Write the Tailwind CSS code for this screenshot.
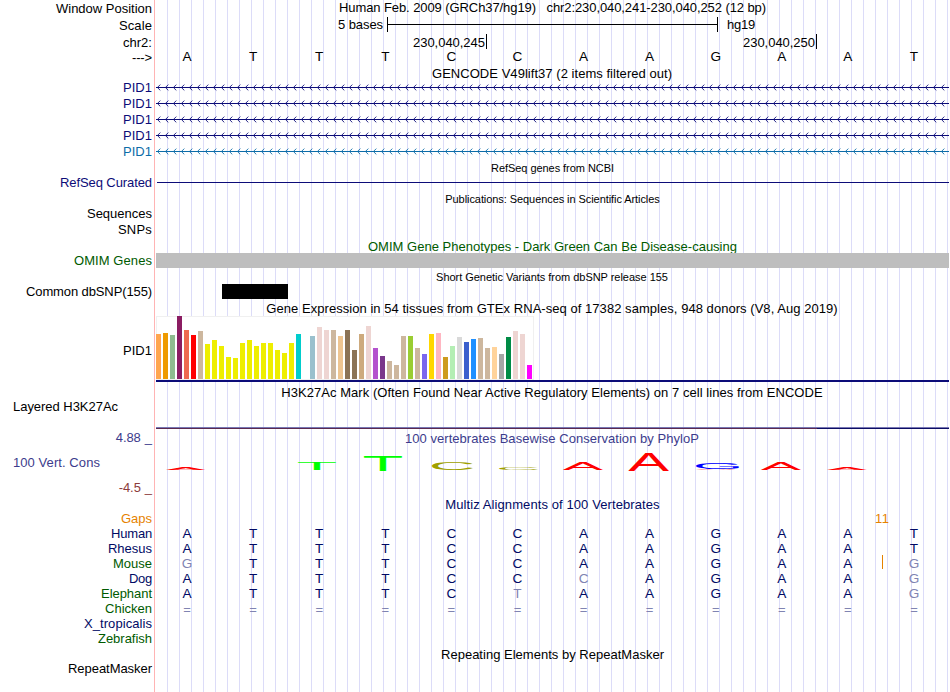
<!DOCTYPE html>
<html lang="en">
<head>
<meta charset="utf-8">
<title>Genome Browser</title>
<script src="https://cdn.jsdelivr.net/npm/@tailwindcss/browser@4"></script>
</head>
<body class="bg-white">
<main class="relative flex h-[692px] w-[950px] overflow-hidden bg-white font-['Liberation_Sans',Arial,sans-serif] text-[13px] leading-[15px] whitespace-pre text-black">
  <!-- guide lines behind the tracks -->
  <div class="absolute inset-y-0 left-[154px] w-px bg-[#ffb4b4]"></div>
  <div class="absolute inset-y-0 left-[167px] w-[782px] bg-[repeating-linear-gradient(90deg,#dcdcf8_0_1px,transparent_1px_12px)]"></div>

  <!-- track labels -->
  <section class="relative flex w-[154px] shrink-0 flex-col items-end pt-px pr-[2px]">
    <div data-w="96">Window Position</div>
    <div class="mt-[2px]" data-w="33">Scale</div>
    <div class="mt-[2px]" data-w="29">chr2:</div>
    <div data-w="20">---&gt;</div>
    <div class="mt-[15px] flex flex-col items-end gap-px text-[#0c0c78]">
      <div data-w="29">PID1</div>
      <div data-w="29">PID1</div>
      <div data-w="29">PID1</div>
      <div data-w="29">PID1</div>
      <div class="text-[#0c6ca8]" data-w="29">PID1</div>
    </div>
    <div class="mt-[16px] text-[#0c0c78]" data-w="92">RefSeq Curated</div>
    <div class="mt-[16px]" data-w="65">Sequences</div>
    <div class="mt-px" data-w="34">SNPs</div>
    <div class="mt-[16px] text-[#005a00]" data-w="78">OMIM Genes</div>
    <div class="mt-[16px]" data-w="126">Common dbSNP(155)</div>
    <div class="mt-[44px]" data-w="29">PID1</div>
    <div class="mt-[41px] ml-[13px] self-start" data-w="105">Layered H3K27Ac</div>
    <div class="mt-[16px] flex items-start gap-[4px] text-[#3c3c8c]"><span data-w="25">4.88</span><span>_</span></div>
    <div class="mt-[10px] ml-[13px] self-start text-[#3c3c8c]" data-w="87">100 Vert. Cons</div>
    <div class="mt-[10px] flex items-start gap-[4px] text-[#8c3c3c]"><span data-w="22">-4.5</span><span>_</span></div>
    <div class="mt-[16px] flex flex-col items-end text-[#000a64]">
      <div class="text-[#e68200]" data-w="31">Gaps</div>
      <div data-w="41">Human</div>
      <div data-w="44">Rhesus</div>
      <div class="text-[#005a00]" data-w="39">Mouse</div>
      <div data-w="23">Dog</div>
      <div class="text-[#005a00]" data-w="51">Elephant</div>
      <div class="text-[#005a00]" data-w="47">Chicken</div>
      <div data-w="68">X_tropicalis</div>
      <div class="text-[#005a00]" data-w="54">Zebrafish</div>
    </div>
    <div class="mt-[15px]" data-w="84">RepeatMasker</div>
  </section>

  <!-- track data -->
  <section class="relative flex w-[796px] shrink-0 flex-col">
    <div class="flex h-[17px] justify-center pl-px"><span data-w="427">Human Feb. 2009 (GRCh37/hg19)   chr2:230,040,241-230,040,252 (12 bp)</span></div>
    <div class="flex h-[17px] pl-[184px]">
      <span class="w-[49px]"><span data-w="45">5 bases</span></span>
      <span class="flex h-[15px] w-[331px] items-center border-x border-black"><span class="h-px w-full bg-black"></span></span>
      <span class="ml-[9px]" data-w="28">hg19</span>
    </div>
    <div class="flex h-[15px] leading-[13px]">
      <span class="flex h-[15px] w-[333px] justify-end border-r border-black pt-[2px] pr-px"><span data-w="72">230,040,245</span></span>
      <span class="flex h-[15px] w-[330px] justify-end border-r border-black pt-[2px] pr-px"><span data-w="72">230,040,250</span></span>
    </div>
    <div class="grid h-[17px] w-[793px] grid-cols-12 text-center text-[13.6px]" id="bases"></div>
    <div class="flex h-[14px] justify-center"><span data-w="240">GENCODE V49lift37 (2 items filtered out)</span></div>
    <svg class="ml-[2px] h-[81px] w-[793px]" viewBox="0 0 793 81">
      <defs>
        <pattern id="arrows" width="8" height="16" patternUnits="userSpaceOnUse">
          <path d="M4.3 4.6 L1.4 7.5 L4.3 10.4" fill="none" stroke="#0c0c78" stroke-width=".9"/>
          <path d="M0 7.5H8" stroke="#0c0c78"/>
        </pattern>
        <pattern id="arrowsBlue" width="8" height="16" patternUnits="userSpaceOnUse">
          <path d="M4.3 4.6 L1.4 7.5 L4.3 10.4" fill="none" stroke="#0c6ca8" stroke-width=".9"/>
          <path d="M0 7.5H8" stroke="#0c6ca8"/>
        </pattern>
      </defs>
      <rect width="793" height="64" fill="url(#arrows)"/>
      <rect y="64" width="793" height="16" fill="url(#arrowsBlue)"/>
    </svg>
    <div class="flex h-[21px] justify-center pl-px text-[11px]"><span data-w="123" data-size="11">RefSeq genes from NCBI</span></div>
    <div class="ml-[3px] h-px w-[792px] bg-[#0c0c78]"></div>
    <div class="mt-[9px] flex h-[47px] justify-center pl-px text-[11px]"><span data-w="215" data-size="11">Publications: Sequences in Scientific Articles</span></div>
    <div class="flex h-[14px] justify-center overflow-hidden pl-px text-[#005a00]"><span data-w="369">OMIM Gene Phenotypes - Dark Green Can Be Disease-causing</span></div>
    <div class="ml-[2px] h-[15px] w-[793px] bg-[#bebebe]"></div>
    <div class="mt-[2px] flex h-[14px] justify-center text-[11px]"><span data-w="232" data-size="11">Short Genetic Variants from dbSNP release 155</span></div>
    <div class="ml-[68px] h-[15px] w-[66px] bg-black"></div>
    <div class="mt-[2px] flex h-[15px] justify-center"><span data-w="572">Gene Expression in 54 tissues from GTEx RNA-seq of 17382 samples, 948 donors (V8, Aug 2019)</span></div>
    <div class="ml-[2px] flex h-[64px] w-[378px] items-end gap-[2px] bg-white pb-px shadow-[inset_0_0_0_1px_#f0f0f0]" id="expression"></div>
    <div class="ml-[2px] h-[2px] w-[793px] bg-[#0c0c78]"></div>
    <div class="mt-[3px] flex h-[42px] justify-center"><span data-w="542">H3K27Ac Mark (Often Found Near Active Regulatory Elements) on 7 cell lines from ENCODE</span></div>
    <div class="ml-[2px] h-px w-[793px] bg-[#7878b4]"></div>
    <div class="ml-[2px] flex h-px w-[793px]"><span class="w-[661px] bg-[#5a2850]"></span><span class="flex-1 bg-[#0c0c64]"></span></div>
    <div class="mt-[2px] flex h-[15px] justify-center text-[#3c3c8c]"><span data-w="294">100 vertebrates Basewise Conservation by PhyloP</span></div>
    <!-- conservation logo: each base is stretched to its score -->
    <svg class="h-[51px] w-[796px]" viewBox="154 446 796 51" font-family="Liberation Sans, Arial, sans-serif" font-size="100" id="logo"></svg>
    <div class="flex h-[14px] justify-center pl-px text-[#000a64]"><span data-w="215">Multiz Alignments of 100 Vertebrates</span></div>
    <div class="h-[15px] pl-[721px] tracking-[0.4px] text-[#e68200]">11</div>
    <div class="relative grid h-[121px] w-[793px] grid-cols-12 content-start text-center text-[13.6px] text-[#000a64]" id="alignment">
      <span class="absolute top-[29px] left-[728px] h-[14px] w-px bg-[#e68200]"></span>
    </div>
    <div class="flex justify-center pl-px"><span data-w="223">Repeating Elements by RepeatMasker</span></div>
  </section>
</main>
<script>
const el = (cls, text) => { const s = document.createElement('span'); s.className = cls; s.textContent = text; return s; };

for (const b of 'ATTTCCAAGAAT') document.getElementById('bases').append(el('', b));

// lower case marks a base that differs from the human sequence
const rows = ['ATTTCCAAGAAT', 'ATTTCCAAGAAT', 'gTTTCCAAGAAg', 'ATTTCCcAGAAg', 'ATTTCtAAGAAg', '============'];
for (const row of rows) for (const b of row)
  document.getElementById('alignment').append(b === '=' ? el('h-[15px] pt-px text-[13px] text-[#8084b2]', b)
    : el(b >= 'a' ? 'h-[15px] text-[#8084b2]' : 'h-[15px]', b.toUpperCase()));

const bars = [['#ffa54f',45],['#ee9a00',46],['#8fbc8f',44],['#8b1c62',63],['#ee6a50',49],['#ff0000',44],['#cdb79e',48],
  ...[35,39,33,22,21,36,39,33,36,36,29,26,36].map(h => ['#eeee00', h]),
  ['#00cdcd',45],['#ee82ee',0],['#9ac0cd',43],['#eed5d2',52],['#eed5d2',49],['#cdb79e',49],['#eec591',43],['#8b7355',49],['#8b7355',29],
  ['#cdaa7d',45],['#eed5d2',53],['#b452cd',31],['#7a378b',23],['#cdb79e',18],['#cdb79e',14],['#cdb79e',43],['#9acd32',43],['#cdb79e',31],
  ['#7a67ee',25],['#ffd700',45],['#ffb6c1',46],['#cd9b1d',22],['#b4eeb4',33],['#d9d9d9',42],['#3a5fcd',37],['#1e90ff',40],['#cdb79e',41],
  ['#cdb79e',31],['#ffd39b',32],['#a6a6a6',25],['#008b45',42],['#eed5d2',48],['#eed5d2',45],['#ff00ff',14]];
for (const [c, h] of bars) {
  const bar = el('w-[5px] shrink-0', '');
  bar.style.height = h + 'px';
  bar.style.background = c;
  document.getElementById('expression').append(bar);
}

// glyph extents at 100px: left, right, top above baseline, bottom below baseline
const ext = { A: [0.3, 66.4, 68.8, 0], T: [2.1, 58.9, 68.8, 0], C: [5, 68.5, 69.8, 1], G: [5, 71, 69.8, 1] };
const logo = [['A',166,205.5,467.2,470,'#ff0000'],['T',298,336,462,470,'#00ff00'],['T',364,402,456,471,'#00ff00'],
  ['C',432,473,462,470,'#a0a000'],['C',499,538,467.8,470,'#a0a000'],['A',563,603,463,470,'#ff0000'],['A',628.5,669,453,471,'#ff0000'],
  ['A',696,736,469,470,'#ff0000'],['G',696,739,463,469.2,'#0000ff'],['A',761,801,463,470,'#ff0000'],['A',827,867,467.2,470,'#ff0000']];
for (const [ch, x0, x1, y0, y1, c] of logo) {
  const [l, r, t, b] = ext[ch], sx = (x1 - x0) / (r - l), sy = (y1 - y0) / (t + b);
  const n = document.createElementNS('http://www.w3.org/2000/svg', 'text');
  n.setAttribute('transform', `translate(${x0 - l * sx} ${y1 - b * sy}) scale(${sx} ${sy})`);
  n.setAttribute('fill', c);
  n.textContent = ch;
  document.getElementById('logo').append(n);
}

// track each string to its drawn width
const ctx = document.createElement('canvas').getContext('2d');
for (const n of document.querySelectorAll('[data-w]')) {
  ctx.font = (n.dataset.size || 13) + 'px "Liberation Sans", Arial, sans-serif';
  n.style.letterSpacing = (n.dataset.w - ctx.measureText(n.textContent).width) / n.textContent.length + 'px';
}
</script>
</body>
</html>
